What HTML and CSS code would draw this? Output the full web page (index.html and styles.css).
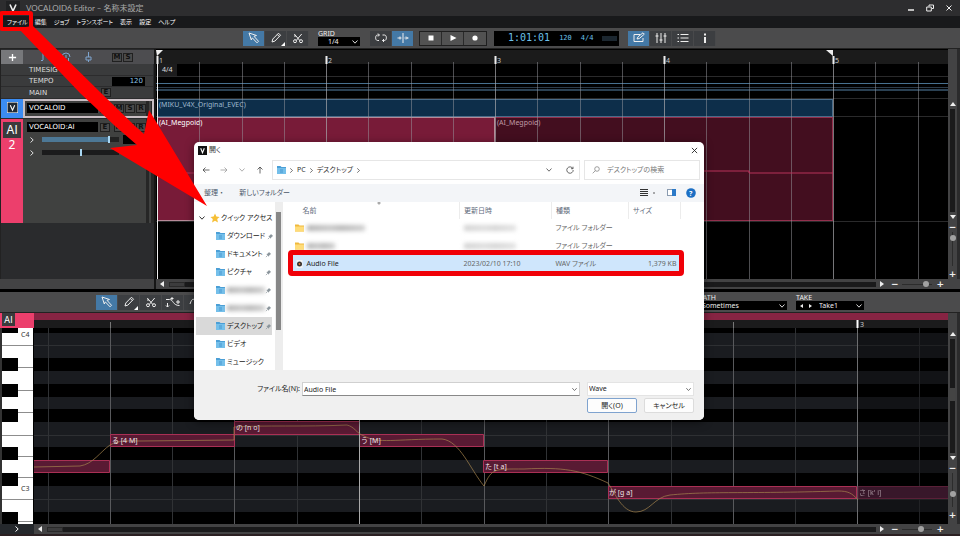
FILE: index.html
```html
<!DOCTYPE html>
<html lang="ja">
<head>
<meta charset="utf-8">
<title>VOCALOID6 Editor</title>
<link rel="stylesheet" href="styles.css">
</head>
<body>
<svg class="defs" aria-hidden="true">
  <symbol id="i-arrow" viewBox="0 0 12 12"><path d="M1 1l7.500 2.500-2.500.8 4.500 5-1.500 1.500-4.700-5-1 2.200z" /></symbol>
  <symbol id="i-pencil" viewBox="0 0 12 12"><path d="M2 10l.8-3L8.500 1.200l2 2L4.900 9.100zM7.300 2.500l2 2" /></symbol>
  <symbol id="i-cut" viewBox="0 0 12 12"><path d="M2.300 2l5.500 6.500M9.700 2L4.200 8.500M2 4h2" /><circle cx="3" cy="9.200" r="1.500" /><circle cx="9" cy="9.200" r="1.500" /></symbol>
  <symbol id="i-curve" viewBox="0 0 16 12"><path d="M1 3.500h3.500c4 0 3 6 10 6M2.500 7v4M1 9.500l1.500 1.500L4 9.500M7 1v3M5.500 2.500h3M13 4v4M11 6h4" /></symbol>
  <symbol id="i-wave" viewBox="0 0 12 12"><path d="M1 8c2-6 4-6 5-2s3 4 5-2" /></symbol>
  <symbol id="i-loop" viewBox="0 0 12 12"><path d="M4 3H2.500C0 3 0 8.500 2.500 8.500H4M3 1.500L4.500 3 3 4.500M7.500 3h2c2.500 0 2.500 5.500 0 5.500H7.500M9 7L7.500 8.500 9 10" /></symbol>
  <symbol id="i-split" viewBox="0 0 12 12"><path d="M6 1v10M.5 6h4M7.500 6h4M3 4.500v3M9 4.500L10.500 6 9 7.500" /></symbol>
  <symbol id="i-edit" viewBox="0 0 12 12"><path d="M7 2.500H1v7h9V6M4 7l1-2.200L10 .8l1.300 1.400L6.300 6.500z" /></symbol>
  <symbol id="i-mixer" viewBox="0 0 12 12"><path d="M2 1v10M6 1v10M10 1v10M.5 4h3M4.500 8h3M8.500 4h3" /></symbol>
  <symbol id="i-list" viewBox="0 0 12 12"><path d="M3.500 2.500h8M3.500 6h8M3.500 9.500h8M.5 2.500h1.500M.5 6h1.500M.5 9.500h1.500" /></symbol>
  <symbol id="i-down" viewBox="0 0 8 8"><path d="M1.500 2.500L4 5.200l2.500-2.700" /></symbol>
  <symbol id="i-right" viewBox="0 0 8 8"><path d="M2.500 1.500L5.200 4 2.500 6.500" /></symbol>
  <symbol id="i-folder" viewBox="0 0 9 8"><path d="M0 0h3.500l1 1H9v7H0z" fill="#4b9fd6" /><path d="M0 2h9v6H0z" fill="#74bfea" /><path d="M3 4h3M3 6h3" stroke="#3d8fca" stroke-width=".8" /></symbol>
  <symbol id="i-yfolder" viewBox="0 0 9 8"><path d="M0 .5h3.500l1 1H9V7.500H0z" fill="#f0b93c" /><path d="M0 2.500h9v5H0z" fill="#ffdc78" /></symbol>
  <symbol id="i-pin" viewBox="0 0 8 8"><path d="M4.500 1L7 3.500 6 4 4.800 5.200l-.3 1.300L1.500 3.500l1.300-.3L4 2z" fill="#8b959c" /><path d="M3 5L1 7" stroke="#8b959c" stroke-width=".8" /></symbol>
</svg>

<header class="titlebar">
  <svg class="applogo" viewBox="0 0 14 14"><rect width="14" height="14" fill="#202123" /><path d="M4 3.500L7 10l3-6.500" fill="none" stroke="#eee" stroke-width="1.600" /></svg>
  <h1>VOCALOID6 Editor – 名称未設定</h1>
  <div class="winbtns">
    <button aria-label="最小化"><svg viewBox="0 0 8 8"><path d="M1 6h6" stroke-width="1.500" /></svg></button>
    <button aria-label="元に戻す"><svg viewBox="0 0 8 8"><path d="M3 2.500V1h4.500v3.500H6M.7 3h4.600v4H.7z" /></svg></button>
    <button aria-label="閉じる"><svg viewBox="0 0 8 8"><path d="M1.500 1.500l5 5M6.500 1.500l-5 5" /></svg></button>
  </div>
</header>
<nav class="menubar">
  <button>ファイル</button><button>編集</button><button>ジョブ</button><button>トランスポート</button><button>表示</button><button>設定</button><button>ヘルプ</button>
</nav>

<div class="toolbar main-tools">
  <div class="group">
    <button class="tool on" aria-label="選択"><svg><use href="#i-arrow" /></svg></button>
    <button class="tool corner" aria-label="鉛筆"><svg><use href="#i-pencil" /></svg></button>
    <button class="tool" aria-label="はさみ"><svg><use href="#i-cut" /></svg></button>
  </div>
  <div class="field grid-field">
    <label for="grid">GRID</label>
    <span class="combo"><select id="grid"><option>1/4</option></select><svg><use href="#i-down" /></svg></span>
  </div>
  <div class="group">
    <button class="tool" aria-label="ループ"><svg><use href="#i-loop" /></svg></button>
    <button class="tool on" aria-label="オートスクロール"><svg><use href="#i-split" /></svg></button>
  </div>
  <div class="transport">
    <button aria-label="停止"><svg viewBox="0 0 8 8"><path d="M1.500 1.500h5v5h-5z" /></svg></button>
    <button aria-label="再生"><svg viewBox="0 0 8 8"><path d="M1.500 1l6 3-6 3z" /></svg></button>
    <button aria-label="録音"><svg viewBox="0 0 8 8"><circle cx="4" cy="4" r="2.600" /></svg></button>
  </div>
  <div class="lcd"><span class="pos">1:01:01</span><span>120</span><span>4/4</span><i></i></div>
  <div class="group">
    <button class="tool on" aria-label="エディター"><svg><use href="#i-edit" /></svg></button>
    <button class="tool" aria-label="ミキサー"><svg><use href="#i-mixer" /></svg></button>
    <button class="tool" aria-label="リスト"><svg><use href="#i-list" /></svg></button>
    <button class="tool" aria-label="情報"><svg viewBox="0 0 12 12"><path d="M6 1.500v2M6 5v6" stroke-width="2" /></svg></button>
  </div>
</div>

<main class="song">
  <section class="tracks">
    <div class="track-head">
      <button class="add" aria-label="トラック追加"><svg viewBox="0 0 10 10"><path d="M5 1v8M1 5h8" /></svg></button>
      <svg class="kinds" viewBox="0 0 56 12"><path d="M6 1v8M4 9.500h2M25 6a4 4 0 1 1 8 0M26.500 7v3M31.500 7v3M29 4v3M49 6h5v3h-5zM51.500 1v5M51.500 9v2" /></svg>
      <div class="sq-pair"><button class="sq">M</button><button class="sq">S</button></div>
    </div>
    <div class="meta"><span>TIMESIG</span></div>
    <div class="meta"><span>TEMPO</span><b>120</b></div>
    <div class="meta"><span>MAIN</span><button class="sq">E</button></div>
    <div class="track selected">
      <div class="tag blue"><svg viewBox="0 0 10 10"><rect width="10" height="10" fill="#222a33" /><path d="M3 3l2 4.500L7 3" /></svg></div>
      <div class="strip"><div class="line"><span class="name">VOCALOID</span><button class="sq">E</button><button class="sq m">M</button><button class="sq">S</button><button class="sq">R</button></div></div>
    </div>
    <div class="track ai">
      <div class="tag pink"><span class="badge">AI</span><strong>2</strong></div>
      <div class="strip">
        <div class="line"><span class="name">VOCALOID:AI</span><button class="sq">E</button><button class="sq m">M</button><button class="sq">S</button><button class="sq">R</button></div>
        <div class="slide"><svg><use href="#i-right" /></svg><input class="vol" type="range" min="0" max="100" value="88" aria-label="音量"><i></i></div>
        <div class="slide"><svg><use href="#i-right" /></svg><input type="range" min="0" max="100" value="50" aria-label="パン"></div>
      </div>
    </div>
  </section>

  <section class="timeline">
    <div class="ruler"></div>
    <div class="lane sig"><span>4/4</span></div>
    <div class="lane tempo"></div>
    <div class="lane mainlane"></div>
    <div class="lane voc"><div class="clip c-blue">(MIKU_V4X_Original_EVEC)</div></div>
    <div class="lane ailane"><div class="clip c-pink">(AI_Megpoid)</div><div class="clip c-wine">(AI_Megpoid)</div></div>
    <svg class="gridlines">
      <defs><pattern id="bar" width="169" height="230" patternUnits="userSpaceOnUse">
        <path d="M1.500 6v224" stroke="#a9a9ad" stroke-opacity=".7" /><path d="M1.500 6v8" stroke="#eee" stroke-width="2" />
        <path d="M43.500 12v218M86.500 12v218M128.500 12v218" stroke="#9a9aa0" stroke-opacity=".5" />
      </pattern></defs>
      <rect width="100%" height="100%" fill="url(#bar)" />
      <path d="M1.500 8v221" stroke="#eee" /><path d="M0 0h7L1 6z" fill="#eee" /><path d="M670 0h7v6z" fill="#eee" />
      <path d="M1 123h170M508 121h43M551 121h42v2h84" stroke="#b8325a" fill="none" />
      <g class="barno"><text x="3" y="13">1</text><text x="172" y="13">2</text><text x="341" y="13">3</text><text x="510" y="13">4</text><text x="679" y="13">5</text></g>
    </svg>
  </section>

  <div class="vbar">
    <span class="tri up song-up"></span><div class="vtrack"></div><span class="tri dn"></span>
    <span class="sign">−</span><input type="range" class="vzoom" min="0" max="100" value="10" aria-label="縦ズーム"><span class="sign">+</span>
  </div>
  <div class="foot-left"></div>
  <div class="hbar">
    <span class="tri lf"></span><div class="htrack"><i></i></div><span class="tri rt"></span>
    <span class="sign">−</span><input type="range" class="hzoom" min="0" max="100" value="85" aria-label="横ズーム"><span class="sign">+</span>
  </div>
</main>

<section class="editor">
  <div class="toolbar edit-tools">
    <div class="group">
      <button class="tool on" aria-label="選択"><svg><use href="#i-arrow" /></svg></button>
      <button class="tool corner" aria-label="鉛筆"><svg><use href="#i-pencil" /></svg></button>
      <button class="tool" aria-label="はさみ"><svg><use href="#i-cut" /></svg></button>
      <button class="tool wide" aria-label="カーブ"><svg><use href="#i-curve" /></svg></button>
      <button class="tool" aria-label="ビブラート"><svg><use href="#i-wave" /></svg></button>
    </div>
    <div class="fields">
      <div class="field breath"><label for="breath">BREATH</label><span class="combo"><select id="breath"><option>Sometimes</option></select><svg><use href="#i-down" /></svg></span></div>
      <div class="field take"><label for="take">TAKE</label><span class="combo"><span class="tri lf"></span><span class="tri rt"></span><select id="take"><option>Take1</option></select><svg><use href="#i-down" /></svg></span></div>
    </div>
  </div>
  <div class="roll">
    <div class="roll-tag"><span class="badge">AI</span></div>
    <div class="roll-head"><div class="pinkstrip"></div><div class="ruler2"><svg><path d="M76.500 2v6M200.500 2v6M325.500 2v6M699.500 2v6" stroke="#777" /><path d="M823.500 0v8" stroke="#fff" stroke-width="2" /><text x="826" y="7">3</text></svg></div></div>
    <div class="vbar">
      <span class="tri up"></span><div class="vtrack"><i></i></div><span class="tri dn"></span>
      <span class="sign">−</span><input type="range" class="vzoom" min="0" max="100" value="64" aria-label="縦ズーム"><span class="sign">+</span>
    </div>
    <div class="keys">
      <svg>
        <rect width="34" height="196" fill="#fff" />
        <path d="M0 17.500h32M16 39.500h16M16 62.500h16M16 84.500h16M0 107.500h32M16 128.500h16M16 149.500h16M0 171.500h32M16 193.500h16" stroke="#8d8d8d" />
        <path d="M0 0h16v5H0zM0 30h16v13H0zM0 56h16v13H0zM0 81h16v13H0zM0 119h16v13H0zM0 145h16v13H0zM0 184h16v12H0z" fill="#000" />
        <text x="19" y="9">C4</text><text x="19" y="163">C3</text>
      </svg>
    </div>
    <div class="notes">
      <svg>
        <rect width="100%" height="196" fill="#1a1c20" />
        <path d="M0 0h920v5H0zM0 30h920v13H0zM0 56h920v13H0zM0 81h920v13H0zM0 119h920v13H0zM0 145h920v13H0zM0 184h920v12H0z" fill="#000" />
        <path d="M0 17.500h920M0 107.500h920M0 171.500h920" stroke="#2e3033" />
        <path d="M14.500 0v196M138.500 0v196M263.500 0v196M387.500 0v196M512.500 0v196M637.500 0v196M761.500 0v196M885.500 0v196" stroke="#303235" />
        <path d="M76.500 0v196M200.500 0v196M450.500 0v196M574.500 0v196M699.500 0v196" stroke="#58595c" />
        <path d="M823.500 0v196" stroke="#6d6e70" />
        <path d="M824 0h96v196h-96z" fill="#000" fill-opacity=".3" />
        <g fill="#591a33" stroke="#aa3055">
          <path d="M-1 132.500h76.500v12H-1zM76.500 106.500h124v12h-124zM200.500 93.500h125v13h-125zM325.500 106.500h124v12h-124zM449.500 132.500h124v12h-124zM574.500 158.500h248v12h-248z" />
          <path d="M824 158.500h100v12H824z" fill="#38172a" stroke="#5a2038" />
        </g>
        <path d="M325.500 0v196" stroke="#aaa" />
        <path d="M0 139l46-1c13-2 20-14 30-21 8-5 20-4 30-4l94-1V99c30-2 70 0 113-2 8 2 9 8 17 11 15 8 30 3 78 3 18 2 28 30 42 47 8-18 10-17 40-17 40-2 56 1 84 14 7 10 14 29 28 29s18-15 34-17c40-4 72-1 168-4 10 0 14 2 20 9" fill="none" stroke="#a5844d" stroke-width=".7" />
        <g class="lyr"><text x="78" y="115">る [4 M]</text><text x="202" y="102">の [n o]</text><text x="327" y="115">う [M]</text><text x="451" y="141">た [t a]</text><text x="575" y="167">が [g a]</text><text x="825" y="167" opacity=".55">さ [k' i]</text></g>
      </svg>
    </div>
    <div class="expand"><svg><use href="#i-right" /></svg></div>
    <div class="hbar">
      <span class="tri lf"></span><div class="htrack"><i></i></div><span class="tri rt"></span>
      <span class="sign">−</span><input type="range" class="hzoom" min="0" max="100" value="64" aria-label="横ズーム"><span class="sign">+</span>
    </div>
  </div>
</section>

<div class="dialog" role="dialog" aria-label="開く">
  <div class="d-title">
    <svg viewBox="0 0 10 10"><rect width="10" height="10" fill="#111" /><path d="M3 2.500l2 5 2-5" fill="none" stroke="#fff" stroke-width="1.200" /></svg><span>開く</span>
    <button aria-label="閉じる"><svg viewBox="0 0 8 8"><path d="M1 1l6 6M7 1L1 7" /></svg></button>
  </div>
  <div class="d-nav">
    <button aria-label="戻る"><svg viewBox="0 0 8 8"><path d="M7.500 4H1M3.500 1.500L1 4l2.500 2.500" /></svg></button>
    <button aria-label="進む" class="dim"><svg viewBox="0 0 8 8"><path d="M.5 4H7M4.500 1.500L7 4 4.500 6.500" /></svg></button>
    <button aria-label="履歴" class="dim small"><svg><use href="#i-down" /></svg></button>
    <button aria-label="上へ"><svg viewBox="0 0 8 8"><path d="M4 7.500V1M1.500 3.500L4 1l2.500 2.500" /></svg></button>
    <div class="address">
      <svg class="fold"><use href="#i-folder" /></svg><svg class="sep"><use href="#i-right" /></svg><span>PC</span><svg class="sep"><use href="#i-right" /></svg><span>デスクトップ</span><svg class="sep"><use href="#i-right" /></svg>
      <svg class="drop"><use href="#i-down" /></svg><svg class="reload" viewBox="0 0 8 8"><path d="M6.800 2.500A3.200 3.200 0 1 0 7.200 4M7 .7v2H5" /></svg>
    </div>
    <div class="search"><svg viewBox="0 0 8 8"><circle cx="5" cy="3" r="2.300" /><path d="M3.300 4.700L.7 7.300" /></svg><input type="text" placeholder="デスクトップの検索" aria-label="検索"></div>
  </div>
  <div class="d-tools">
    <button>整理 ・</button><button>新しいフォルダー</button>
    <svg class="viewicons" viewBox="0 0 60 14"><path d="M2 3.500h8M2 5.500h8M2 7.500h8M2 9.500h8" stroke="#333" stroke-width="1.100" /><circle cx="16" cy="7" r=".8" fill="#444" /><rect x="29.500" y="3.500" width="8" height="6" fill="#fff" stroke="#8a9bb0" /><rect x="34" y="3" width="4" height="7" fill="#2c7ac8" /><circle cx="53" cy="7" r="4.800" fill="#1c6fc4" /><text x="51" y="10">?</text></svg>
  </div>
  <div class="d-body">
    <ul class="places">
      <li class="root"><svg class="chev"><use href="#i-down" /></svg><svg class="star" viewBox="0 0 10 10"><path d="M5 .5l1.400 3 3.200.4-2.400 2.200.7 3.300L5 7.800 2.100 9.400l.7-3.300L.4 3.900l3.200-.4z" fill="#f6bf36" /></svg>クイック アクセス</li>
      <li><svg class="fold"><use href="#i-folder" /></svg>ダウンロード<svg class="pin"><use href="#i-pin" /></svg></li>
      <li><svg class="fold"><use href="#i-folder" /></svg>ドキュメント<svg class="pin"><use href="#i-pin" /></svg></li>
      <li><svg class="fold"><use href="#i-folder" /></svg>ピクチャ<svg class="pin"><use href="#i-pin" /></svg></li>
      <li><svg class="fold"><use href="#i-folder" /></svg><i class="smudge"></i><svg class="pin"><use href="#i-pin" /></svg></li>
      <li><svg class="fold"><use href="#i-folder" /></svg><i class="smudge"></i><svg class="pin"><use href="#i-pin" /></svg></li>
      <li class="cur"><svg class="fold"><use href="#i-folder" /></svg>デスクトップ<svg class="pin"><use href="#i-pin" /></svg></li>
      <li><svg class="fold"><use href="#i-folder" /></svg>ビデオ</li>
      <li><svg class="fold"><use href="#i-folder" /></svg>ミュージック</li>
    </ul>
    <div class="p-scroll"><i></i></div>
    <div class="files">
      <table>
        <colgroup><col class="c1"><col class="c2"><col class="c3"><col class="c4"></colgroup>
        <thead><tr><th class="sorted">名前</th><th>更新日時</th><th>種類</th><th>サイズ</th></tr></thead>
        <tbody>
          <tr><td><svg class="fold"><use href="#i-yfolder" /></svg><i class="smudge long"></i></td><td><i class="smudge date"></i></td><td>ファイル フォルダー</td><td></td></tr>
          <tr><td><svg class="fold"><use href="#i-yfolder" /></svg><i class="smudge short"></i></td><td><i class="smudge date"></i></td><td>ファイル フォルダー</td><td></td></tr>
          <tr class="sel"><td><svg class="fold" viewBox="0 0 8 8"><path d="M1 0h6v8H1z" fill="#f4f4f4" /><circle cx="4" cy="4" r="2.500" fill="#333" /><circle cx="4" cy="4" r=".9" fill="#e8752c" /></svg><span class="fname">Audio File</span></td><td>2023/02/10 17:10</td><td>WAV ファイル</td><td class="num">1,379 KB</td></tr>
        </tbody>
      </table>
      <div class="mark"></div>
    </div>
  </div>
  <div class="d-foot">
    <label for="fn">ファイル名(N):</label>
    <span class="fn"><input id="fn" type="text" value="Audio File"><svg><use href="#i-down" /></svg></span>
    <span class="kind"><select aria-label="種類"><option>Wave</option></select><svg><use href="#i-down" /></svg></span>
    <div class="acts"><button class="primary">開く(O)</button><button>キャンセル</button></div>
  </div>
</div>

<svg class="callout" viewBox="0 0 210 210" aria-hidden="true"><path d="M18 28L33 26 100 92 135 126 144 134 149 110 207 206 110 148 137 145 115 126 80 93z" fill="#f00" /><rect x="1" y="13" width="30" height="16" rx="1" fill="none" stroke="#f00" stroke-width="4" /></svg>
</body>
</html>
```
FILE: styles.css
```css
* { box-sizing: border-box; }
body {
  margin: 0; min-height: 100vh; display: flex; flex-direction: column; position: relative; overflow: hidden;
  background: #0b0b0c; color: #ddd;
  font: 7px/10px "Noto Sans", "Noto Sans CJK JP", sans-serif;
}
button, input, select { font: inherit; color: inherit; border: 0; padding: 0; margin: 0; background: none; border-radius: 0; }
button { display: flex; align-items: center; justify-content: center; }
select, input { appearance: none; outline: 0; min-width: 0; }
svg { fill: none; stroke: none; display: block; flex: none; }
ul { list-style: none; margin: 0; padding: 0; }
.defs { position: absolute; width: 0; height: 0; }

.titlebar { height: 16px; display: flex; align-items: center; background: #2d2d2f; padding: 0 7px 0 6px; }
.titlebar h1 { margin: 0 0 0 6px; font: 8px/10px Lato, "Noto Sans CJK JP", sans-serif; color: #aaa; }
.applogo { width: 14px; height: 14px; }
.winbtns { margin-left: auto; display: flex; gap: 11px; }
.winbtns svg { width: 8px; height: 8px; stroke: #eee; }
.menubar { height: 12px; display: flex; align-items: center; gap: 7px; padding-left: 7px; background: #18191b; color: #fff; font-size: 6px; font-feature-settings: "palt"; }

.toolbar { height: 21px; display: flex; align-items: center; background: #4b4b4c; border-bottom: 1px solid #222; }
.main-tools { padding-left: 243px; }
.group { display: flex; }
.tool { width: 22px; height: 15px; background: #3c3e41; border-right: 1px solid #48494b; position: relative; }
.tool svg { width: 12px; height: 12px; stroke: #eee; stroke-width: 1; }
.tool.wide svg { width: 16px; }
.tool.on { background: #4479a6; }
.corner::after { content: ""; position: absolute; right: 1px; bottom: 0; border: 2px solid transparent; border-right-color: #fff; border-bottom-color: #fff; }
.field { display: flex; flex-direction: column; line-height: 7px; color: #eee; }
.combo { display: flex; align-items: center; height: 9px; background: #000; position: relative; }
.combo select { flex: 1; height: 9px; padding: 0 10px 0 10px; line-height: 9px; }
.combo > svg { position: absolute; right: 1px; width: 8px; height: 8px; stroke: #ddd; pointer-events: none; }
.grid-field { width: 42px; margin: 0 10px 0 9px; }
.transport { display: flex; margin: 0 7px 0 5px; border: 1px solid #1f1f1f; }
.transport button { width: 22px; height: 13px; background: #525252; border-right: 1px solid #2a2a2a; }
.transport button:last-child { border: 0; }
.transport svg { width: 8px; height: 8px; fill: #fff; }
.lcd { width: 125px; height: 15px; background: #000; display: flex; align-items: center; gap: 9px; padding-left: 14px; margin-right: 9px; color: #6cc0ea; font-family: "DejaVu Sans Mono", monospace; }
.lcd .pos { font-size: 10px; }
.lcd i { width: 15px; height: 5px; background: #1c2730; }

.song { display: grid; grid-template-columns: 156px 1fr 12px; grid-template-rows: 230px 10px; border-bottom: 3px solid #000; height: 243px; }
.tracks { background: #2a2b2d; border-left: 1px solid #222; border-right: 2px solid #161616; padding-top: 1px; }
.track-head { height: 14px; display: flex; align-items: center; background: #4d4d50; }
.add { width: 22px; height: 14px; background: #77787b; }
.add svg { width: 9px; height: 9px; stroke: #fff; stroke-width: 1.500; }
.kinds { width: 56px; height: 12px; margin-left: 14px; stroke: #7ea5cf; }
.sq-pair { display: flex; gap: 1px; margin-left: 19px; }
.sq { width: 10px; height: 9px; border: 1px solid #202020; background: #4a4a4a; color: #111; font: bold 7px/7px "DejaVu Sans", sans-serif; }
.meta, .name { font-family: "DejaVu Sans", sans-serif; font-size: 7px; }
.meta { height: 12px; display: flex; align-items: center; padding-left: 28px; background: #3a3b3c; border-bottom: 1px solid #2c2c2d; position: relative; margin-right: 1px; }
.meta:nth-child(3) { height: 11px; }
.meta span { width: 72px; }
.meta b { width: 33px; margin-left: 11px; background: #000; color: #8dc4e4; font-weight: 400; text-align: right; padding-right: 2px; line-height: 9px; }
.track { display: flex; background: #404140; }
.track .tag { width: 22px; display: flex; flex-direction: column; align-items: center; padding-top: 3px; }
.blue { background: #3b8cf2; }
.blue svg { width: 11px; height: 11px; stroke: #fff; }
.pink { background: #ec3f6c; }
.tag strong { font-size: 12px; line-height: 13px; font-weight: 400; color: #fff; }
.badge { background: #3a3a3c; color: #fff; font: 12px/16px Inter, sans-serif; padding: 0 3px; }
.strip { flex: 1; padding: 3px 0 0 4px; border-right: 8px double #262626; }
.selected { height: 19px; }
.selected .strip { outline: 2px solid #c9bfc4; outline-offset: -2px; padding-top: 4px; }
.ai { height: 104px; margin-top: 1px; }
.ai .strip { padding-top: 3px; }
.line { display: flex; gap: 1px; align-items: center; }
.name { width: 71px; line-height: 10px; background: #000; color: #fff; margin-right: 1px; padding-left: 2px; }
.line .m { margin-left: 3px; }
.slide { display: flex; align-items: center; height: 13px; }
.slide:nth-child(2) { margin-top: 1px; }
.slide svg { width: 8px; height: 8px; stroke: #ddd; margin: 0 6px 0 1px; }
.slide input { width: 77px; height: 5px; background: #1b1b1c; }
.slide .vol { background: linear-gradient(90deg, #4d7896 88%, #222 88%); }
.slide i { width: 20px; height: 9px; background: #000; margin-left: 4px; }
.slide input::-webkit-slider-thumb { appearance: none; width: 2px; height: 7px; background: #a9d8f4; }

.timeline { position: relative; background: #000; overflow: hidden; padding-top: 1px; }
.ruler { height: 14px; background: #1b1b1b; }
.lane { border-bottom: 1px solid #2a2a2b; padding-left: 1px; display: flex; }
.sig { height: 13px; }
.sig span { width: 20px; background: #1c1c1d; padding-left: 5px; line-height: 12px; }
.tempo { height: 11px; border-bottom: 1px solid #2b3b4a; background: linear-gradient(#47708f, #47708f) 0 6px / 100% 1px no-repeat; }
.mainlane { height: 11px; background: linear-gradient(#2b4153, #2b4153) 0 1px / 100% 2px no-repeat; }
.voc { height: 18px; }
.ailane { height: 105px; }
.clip { width: 338px; flex: none; padding: 0 2px; border: 1px solid; border-width: 1px 1px 1px 0; height: 104px; overflow: hidden; }
.c-blue { width: 676px; height: 18px; background: #0d2e4a; border-color: #4a6c89; color: #9fb9cf; }
.c-pink { background: #781b38; border-color: #b78a98; color: #fff; }
.c-wine { background: #430e1f; border-color: #93304d; color: #c09aa5; }
.gridlines { position: absolute; inset: 1px 0 0 0; width: 100%; height: 229px; }
.barno text, .ruler2 text { fill: #ccc; font-size: 7px; }

.vbar { background: #434344; border-right: 3px solid #2b2b2c; display: flex; flex-direction: column; align-items: center; }
.song .vbar { padding-top: 53px; }
.vtrack { width: 5px; flex: 1; background: #1a1a1b; margin: 3px 0; position: relative; }
.vtrack i { position: absolute; inset: 43% 0 46% 0; background: #444; }
.tri { border: 3px solid transparent; width: 0; height: 0; flex: none; }
.up { border-bottom: 4px solid #eee; border-top: 0; }
.dn { border-top: 4px solid #eee; border-bottom: 0; }
.lf { border-right: 4px solid #eee; border-left: 0; }
.rt { border-left: 4px solid #eee; border-right: 0; }
.sign { font: bold 9px/9px "DejaVu Sans", sans-serif; color: #eee; }
.vbar .sign { margin-top: 4px; }
.vzoom { writing-mode: vertical-lr; width: 7px; height: 34px; background: linear-gradient(#2c2c2c, #2c2c2c) center / 1px 100% no-repeat; }
.hzoom { width: 30px; height: 7px; background: linear-gradient(#2c2c2c, #2c2c2c) center / 100% 1px no-repeat; margin: 0 4px; }
.vzoom::-webkit-slider-thumb, .hzoom::-webkit-slider-thumb { appearance: none; width: 6px; height: 6px; border-radius: 50%; background: #a2a2a2; }
.foot-left { background: #434344; border-right: 2px solid #161616; }
.hbar { grid-column: 2 / 4; background: #434344; display: flex; align-items: center; padding: 0 16px 0 4px; height: 10px; }
.htrack { flex: 1; height: 5px; background: #1a1a1b; margin: 0 4px 0 5px; }
.htrack i { display: block; width: 16px; height: 5px; background: #3c3c3d; border: 1px solid #292929; }
.hbar .sign { margin-left: 7px; }
.hbar .hzoom + .sign { margin-left: 0; }

.editor { flex: 1; display: flex; flex-direction: column; }
.edit-tools { padding-left: 96px; }
.fields { margin-left: auto; display: flex; gap: 9px; padding-right: 96px; }
.breath { width: 97px; }
.breath select { padding-left: 12px; }
.take { width: 68px; }
.take .combo { gap: 6px; padding-left: 4px; }
.take .tri { border-width: 2px 3px; }
.take .lf { border-left: 0; }
.take .rt { border-right: 0; }
.take select { padding: 0 0 0 1px; }
.roll { flex: 1; display: grid; grid-template-columns: 34px 1fr 12px; grid-template-rows: 15px 196px 10px; background: #2b2022; }
.roll-tag { background: #ec3f6c; padding-left: 2px; }
.roll-tag .badge { display: inline-block; font-size: 9px; line-height: 13px; padding: 0 2px; }
.pinkstrip { height: 7px; background: #872443; }
.ruler2 { height: 8px; background: #1b1b1c; }
.ruler2 svg { width: 100%; height: 8px; overflow: visible; }
.roll .vbar { grid-row: 1 / 3; grid-column: 3; padding: 19px 0 4px; }
.keys { border-left: 2px solid #333; border-right: 1px solid #000; }
.keys svg { width: 100%; height: 196px; }
.keys text { font-size: 7px; fill: #333; }
.notes { overflow: hidden; }
.notes svg { width: 100%; height: 196px; }
.lyr { font-size: 7px; fill: #f0e4e8; }
.expand { background: #25282c; display: flex; align-items: center; justify-content: center; }
.expand svg { width: 8px; height: 8px; stroke: #fff; }

.dialog { position: absolute; left: 194px; top: 142px; width: 510px; background: #fff; color: #333; border-radius: 5px; overflow: hidden; font-feature-settings: "palt"; box-shadow: 0 2px 8px rgba(0, 0, 0, .5); }
.d-title { height: 16px; display: flex; align-items: center; padding: 0 6px 0 4px; gap: 2px; }
.d-title > svg { width: 9px; height: 9px; }
.d-title button { margin-left: auto; }
.d-title button svg { width: 7px; height: 7px; stroke: #222; }
.d-nav { display: flex; align-items: center; padding: 2px 4px 3px 8px; gap: 10px; }
.d-nav button svg { width: 8px; height: 8px; stroke: #444; stroke-width: .8; }
.d-nav .dim svg { stroke: #999; }
.d-nav .small { width: 8px; }
.address { flex: 1; height: 20px; border: 1px solid #e6e6e6; display: flex; align-items: center; padding: 0 5px 0 4px; gap: 2px; margin: 0 -6px 0 -2px; }
.fold { width: 9px; height: 8px; }
.sep, .drop, .reload { width: 8px; height: 8px; stroke: #444; stroke-width: .8; }
.sep { width: 7px; height: 7px; }
.drop { margin-left: auto; margin-right: 11px; }
.search { width: 116px; height: 20px; border: 1px solid #e6e6e6; display: flex; align-items: center; padding-left: 7px; gap: 7px; }
.search svg { width: 8px; height: 8px; stroke: #777; stroke-width: .7; }
.search input { flex: 1; }
.search input::placeholder { color: #777; }
.d-tools { height: 18px; margin-top: 1px; background: #f3f5f8; display: flex; align-items: center; padding: 0 6px 0 10px; gap: 16px; color: #4a5568; }
.viewicons { width: 60px; height: 14px; margin-left: auto; }
.viewicons text { font: bold 7px "Noto Sans", sans-serif; fill: #fff; }
.d-body { display: flex; height: 168px; }
.places { width: 81px; padding: 6px 3px 0 2px; overflow: hidden; }
.places li { height: 18px; display: flex; align-items: center; gap: 2px; padding-left: 20px; color: #222; white-space: nowrap; }
.places .root { padding-left: 2px; gap: 1px; height: 19px; }
.chev { width: 8px; height: 8px; stroke: #333; margin-right: 3px; }
.star { width: 10px; height: 10px; }
.pin { width: 7px; height: 7px; margin-left: auto; }
.cur { background: #d9d9d9; }
.p-scroll { width: 8px; background: #ededed; padding: 10px 1px 0 1px; }
.p-scroll i { display: block; width: 5px; height: 118px; background: #878787; }
.smudge { display: inline-block; width: 38px; height: 6px; background: linear-gradient(90deg, #b4b4b4, #c6c6c6 40%, #b8b8b8 60%, #cfcfcf); filter: blur(2px); }
.places .smudge { margin-right: -6px; }
.files { flex: 1; padding: 0 23px 0 8px; position: relative; }
.files table { width: 100%; border-collapse: collapse; table-layout: fixed; color: #666; }
.c1 { width: 169px; } .c2 { width: 92px; } .c3 { width: 77px; } .c4 { width: 52px; }
.files th { font-weight: 400; text-align: left; padding: 0 0 0 4px; height: 17px; border-right: 1px solid #ececec; color: #5f6b7c; }
.files th.sorted { padding-left: 12px; background: radial-gradient(circle at 88px 1px, #aaa 1px, transparent 2px); }
.files td { height: 18px; padding: 0 0 0 4px; white-space: nowrap; }
.files td .fold, .files td .fname, .files td .smudge { display: inline-block; vertical-align: middle; }
.files td .smudge { margin-left: 3px; }
.files td .date { width: 52px; margin-left: 0; opacity: .6; }
.files .long { width: 58px; }
.files .short { width: 28px; }
.fname { color: #222; margin-left: 3px; }
.sel { background: #cfe6fc; }
.files .num { text-align: right; padding-right: 4px; }
.mark { position: absolute; left: 5px; top: 48px; right: 20px; height: 26px; border: 5px solid #f00008; border-radius: 4px; }
.d-foot { background: #f0f0f0; display: grid; grid-template-columns: 106px 1fr 107px; column-gap: 7px; row-gap: 2px; padding: 12px 10px 7px 0; align-items: center; color: #222; }
.d-foot label { text-align: right; }
.fn, .kind { height: 14px; display: flex; align-items: center; background: #fff; border: 1px solid #d0d0d0; position: relative; }
.fn { border-bottom-color: #888; margin-left: -5px; }
.kind { border-color: #e4e4e4; }
.d-foot input, .d-foot select { flex: 1; padding: 0 12px 0 1px; height: 12px; }
.fn svg, .kind svg { position: absolute; right: 1px; width: 7px; height: 7px; stroke: #666; pointer-events: none; }
.acts { grid-column: 3; display: flex; gap: 7px; }
.acts button { flex: 1; height: 15px; background: #fdfdfd; border: 1px solid #dcdcdc; border-radius: 2px; }
.acts .primary { border-color: #7fa3cf; }
.callout { position: absolute; left: 0; top: 0; width: 210px; height: 210px; pointer-events: none; }
```
